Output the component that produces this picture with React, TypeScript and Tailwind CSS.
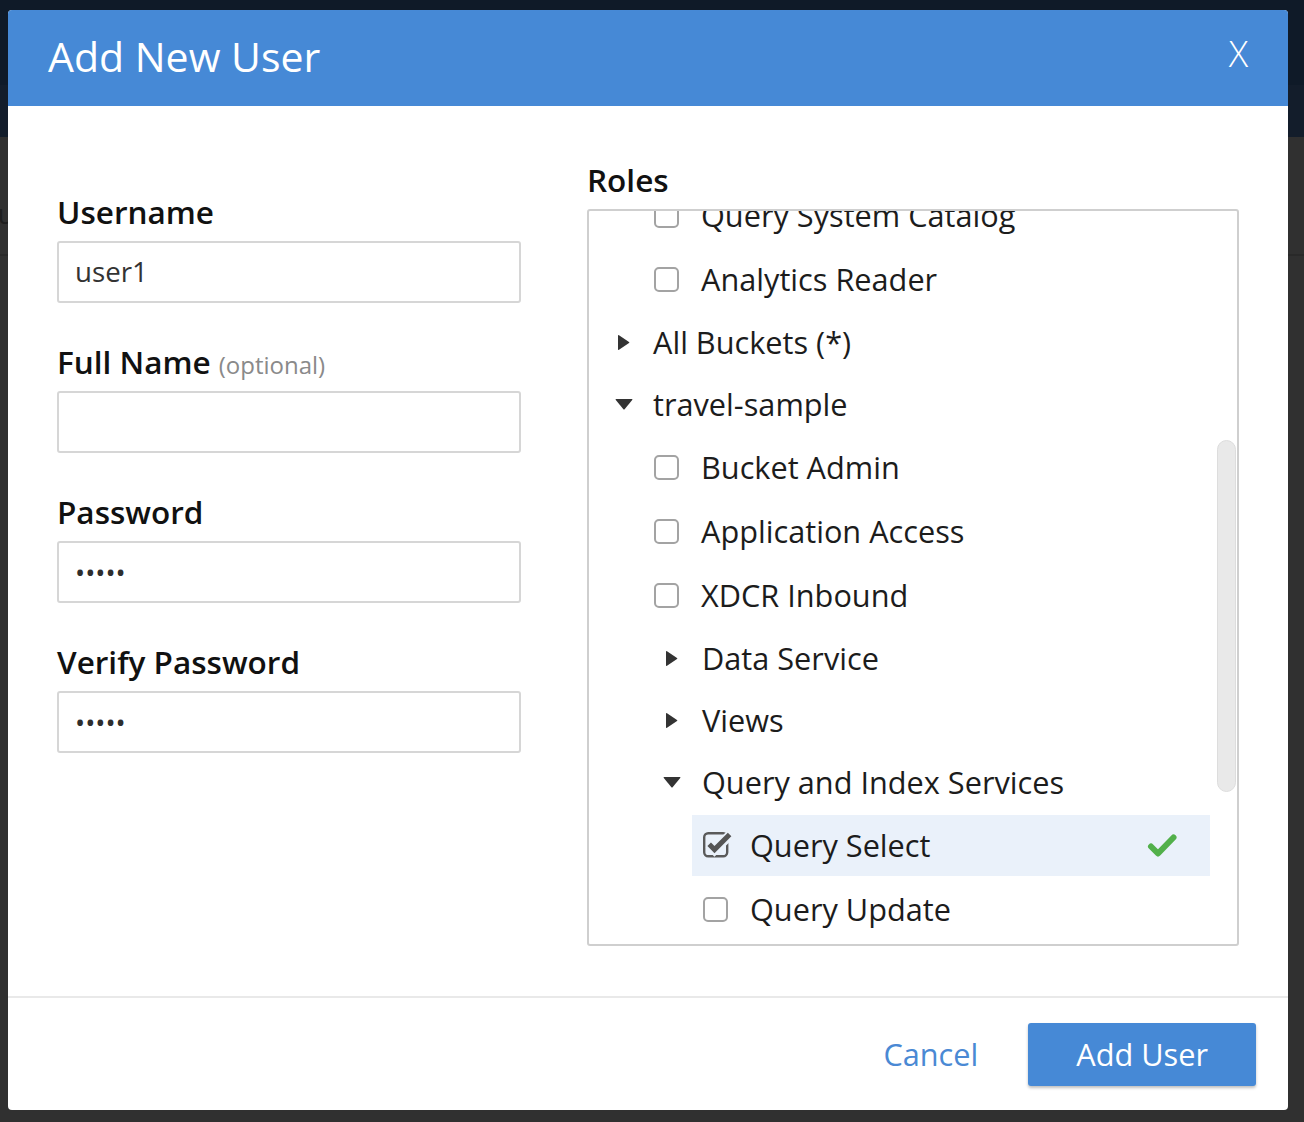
import React from "react";

const CaretRight = () => (
  <svg width="12" height="17" viewBox="0 0 12 17" aria-hidden>
    <path d="M1 1.2 L11 8 Q11.8 8.5 11 9 L1 15.8 Q0 16.4 0 15.3 V1.7 Q0 0.6 1 1.2 Z" fill="#333" />
  </svg>
);

const CaretDown = () => (
  <svg width="18" height="11" viewBox="0 0 18 11" aria-hidden>
    <path d="M1.2 0 H16.8 Q18 0 17.2 1 L9.6 10.2 Q9 10.9 8.4 10.2 L0.8 1 Q0 0 1.2 0 Z" fill="#333" />
  </svg>
);

const Box = () => (
  <div className="w-[25px] h-[25px] shrink-0 rounded-[5px] border-2 border-[#a3a3a3] bg-white" />
);

const CheckedBox = () => (
  <svg width="31" height="27" viewBox="0 0 31 27" className="shrink-0 -mt-[2px]" aria-hidden>
    <rect x="1.2" y="2.2" width="23" height="23" rx="4" fill="none" stroke="#5a5a5a" strokeWidth="2.4" />
    <path d="M6 13.5 L11.5 19 L27 4" fill="none" stroke="#eaf1fa" strokeWidth="9.5" strokeLinejoin="miter" />
    <path d="M6.2 13.3 L11.5 18.6 L26.6 3.6" fill="none" stroke="#555" strokeWidth="5" strokeLinejoin="miter" />
  </svg>
);

const GreenCheck = () => (
  <svg width="30" height="25" viewBox="0 0 30 25" aria-hidden>
    <path d="M4 13.5 L11 20.5 L26.5 4.5" fill="none" stroke="#52b04a" strokeWidth="6" strokeLinecap="round" strokeLinejoin="round" />
  </svg>
);

function CheckRow({ label }: { label: string }) {
  return (
    <div className="h-[64px] shrink-0 flex items-center pl-[65px]">
      <Box />
      <span className="ml-[22px] text-[30.7px] text-[#1c1c1c] whitespace-nowrap">{label}</span>
    </div>
  );
}

function GroupRow({ label, open, level }: { label: string; open: boolean; level: 1 | 2 }) {
  return (
    <div className={"h-[62px] shrink-0 flex items-center " + (level === 1 ? "pl-[23px]" : "pl-[71px]")}>
      <div className="w-[24px] flex justify-center items-center">{open ? <CaretDown /> : <CaretRight />}</div>
      <span className={"text-[30.7px] text-[#1c1c1c] whitespace-nowrap " + (level === 1 ? "ml-[17px]" : "ml-[18px]")}>
        {label}
      </span>
    </div>
  );
}

function Field({ label, optional, value, password }: { label: string; optional?: boolean; value: string; password?: boolean }) {
  return (
    <div className="flex flex-col">
      <div className="h-[36px] leading-[36px] flex items-baseline whitespace-nowrap -mt-[1px] mb-[1px]">
        <span className="text-[31.5px] font-semibold text-[#111]">{label}</span>
        {optional && <span className="ml-[8px] text-[24px] text-[#8a8a8a]">(optional)</span>}
      </div>
      <div className="mt-[10px] h-[62px] border-2 border-[#d6d6d6] rounded-[3px] bg-white flex items-center pl-[16px]">
        {password ? (
          <span className="text-[27px] text-[#2e2e2e] leading-none">{value}</span>
        ) : (
          <span className="text-[27.7px] text-[#333]">{value}</span>
        )}
      </div>
    </div>
  );
}

export default function App() {
  return (
    <div className="relative w-[1304px] h-[1122px] overflow-hidden bg-[#303030] font-['Open_Sans',sans-serif]">
      {/* page behind the overlay */}
      <div className="h-[85px] bg-[#0f1a28]" />
      <div className="h-[52px] bg-[#131d2b]" />
      <div className="h-[119px] border-b-2 border-[#292929] pt-[58px]">
        <span className="block -ml-[12px] text-[28px] leading-[36px] text-[#1e1e1e]">fu</span>
      </div>

      {/* modal */}
      <div className="absolute left-[8px] top-[10px] w-[1280px] h-[1100px] bg-white rounded-[4px] overflow-hidden flex flex-col">
        <header className="h-[96px] shrink-0 bg-[#4689d6] flex items-center justify-between pl-[40px] pr-[40px] pb-[4px]">
          <h1 className="text-[41px] text-white leading-none">Add New User</h1>
          <span className="text-[36px] font-light text-white leading-none -mt-[4px]">X</span>
        </header>

        <div className="h-[890px] shrink-0 flex px-[49px]">
          <div className="w-[464px] shrink-0 pt-[89px] flex flex-col gap-[42px]">
            <Field label="Username" value="user1" />
            <Field label="Full Name" optional value="" />
            <Field label="Password" value="•••••" password />
            <Field label="Verify Password" value="•••••" password />
          </div>

          <div className="flex-1 ml-[66px] pt-[56px] flex flex-col">
            <div className="h-[36px] leading-[36px] text-[31.5px] font-semibold text-[#111]">Roles</div>
            <div className="relative mt-[11px] h-[737px] border-2 border-[#cfcfcf] rounded-[3px] overflow-hidden">
              <div className="-mt-[28px] flex flex-col">
                <CheckRow label="Query System Catalog" />
                <CheckRow label="Analytics Reader" />
                <GroupRow label="All Buckets (*)" open={false} level={1} />
                <GroupRow label="travel-sample" open level={1} />
                <CheckRow label="Bucket Admin" />
                <CheckRow label="Application Access" />
                <CheckRow label="XDCR Inbound" />
                <GroupRow label="Data Service" open={false} level={2} />
                <GroupRow label="Views" open={false} level={2} />
                <GroupRow label="Query and Index Services" open level={2} />
                <div className="h-[64px] shrink-0 flex items-center pl-[103px]">
                  <div className="w-[518px] h-[61px] bg-[#eaf1fa] flex items-center pl-[11px] pr-[33px]">
                    <CheckedBox />
                    <span className="ml-[16px] text-[30.7px] text-[#1c1c1c] whitespace-nowrap">Query Select</span>
                    <div className="ml-auto flex items-center">
                      <GreenCheck />
                    </div>
                  </div>
                </div>
                <div className="h-[64px] shrink-0 flex items-center pl-[114px]">
                  <Box />
                  <span className="ml-[22px] text-[30.7px] text-[#1c1c1c] whitespace-nowrap">Query Update</span>
                </div>
              </div>
              {/* overlay scrollbar */}
              <div className="absolute right-[1px] top-[229px] w-[19px] h-[352px] rounded-full bg-[#e9e9e9] border border-[#dddddd]" />
            </div>
          </div>
        </div>

        <footer className="flex-1 border-t-2 border-[#e9e9e9] flex items-center justify-end pr-[32px]">
          <span className="text-[30.7px] text-[#4a89d4] mr-[50px]">Cancel</span>
          <button className="h-[63px] px-[48px] bg-[#4689d6] text-white text-[30.7px] rounded-[3px] shadow-[0_2px_3px_rgba(0,0,0,0.25)]">
            Add User
          </button>
        </footer>
      </div>
    </div>
  );
}
